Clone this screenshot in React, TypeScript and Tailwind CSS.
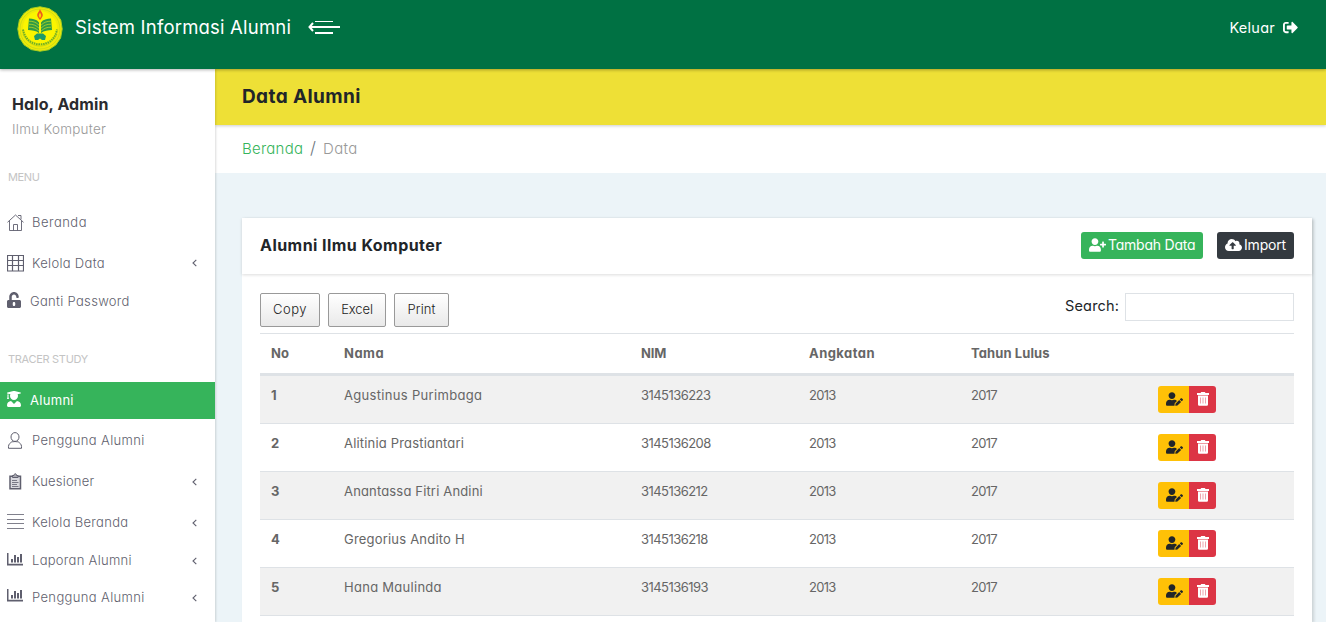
import type { ReactNode } from 'react';
import { FaCloudUploadAlt, FaSignOutAlt, FaUnlockAlt, FaUserEdit, FaUserGraduate, FaUserPlus } from 'react-icons/fa';

const line = { fill: 'none', stroke: 'currentColor', strokeWidth: 1 };

function Crest() {
  return (
    <svg viewBox="0 0 46 46" className="size-[46px] shrink-0">
      <path
        d="M23 .8 32 2.6 39 7.2 43.8 14 45.2 23 43.6 32 38.8 39 31.6 43.8 23 45.2 14.2 43.6 7 38.8 2.4 31.6.8 23 2.4 14 7.2 7.2 14 2.4Z"
        fill="#f0ea08"
        stroke="#a8cd20"
        strokeWidth="1"
      />
      <circle cx="23" cy="23" r="20" fill="none" stroke="#c4d916" strokeWidth=".8" />
      <circle cx="23" cy="22.5" r="17.2" fill="#fbf500" />
      <path d="M6 28c3 7 9 12 17 12s14-5 17-12" fill="none" stroke="#b5cf18" strokeWidth=".8" />
      <path d="M6 23.500c1.500 9 8 14.800 17 14.800s15.500-5.800 17-14.800" fill="none" stroke="#6fae26" strokeWidth="2" strokeDasharray="1.6 .7" />
      <path d="M12 12.500c4 0 8 1 10 4V27c-3-2.200-7-3-11-3Z" fill="#2e9a45" />
      <path d="M34 12.500c-4 0-8 1-10 4V27c3-2.200 7-3 11-3Z" fill="#2e9a45" />
      <path
        d="M12 15.200c4 0 7 1 10 4M12 18.200c4 0 7 1 10 4M12 21.200c4 0 7 1 10 4M34 15.200c-4 0-7 1-10 4M34 18.200c-4 0-7 1-10 4M34 21.200c-4 0-7 1-10 4"
        fill="none"
        stroke="#cfe022"
        strokeWidth=".7"
      />
      <path d="M23 15v13" stroke="#fbf500" strokeWidth="1.500" />
      <path d="M20 27.500h6l3 2.500-1 4h-3l-2-1.500-2 1.500h-3l-1-4Z" fill="#1f9b68" />
      <path d="M23 3c-.5 2.300-2.800 3.700-2.800 6 0 1.800 1.400 2.800 2 4.600h1.600c.6-1.800 2-2.800 2-4.600 0-2.300-2.300-3.700-2.800-6Z" fill="#ee5a1c" />
      <path d="M23 6.500c-.4 1.200-1.200 2-1.200 3s.7 1.800 1.200 2.500c.5-.7 1.200-1.500 1.200-2.500s-.8-1.800-1.200-3Z" fill="#fbd500" />
    </svg>
  );
}

function MenuArrow() {
  return (
    <svg viewBox="0 0 32 14" className="h-[14px] w-8 -translate-y-[2px]" fill="none" stroke="#fff">
      <path d="M7 1.500h18" strokeWidth="1" />
      <path d="M1.500 7H32M7 13h18" strokeWidth="2" />
      <path d="M5 3 1.500 7 5 11" strokeWidth="2" />
    </svg>
  );
}

const TrashIcon = () => (
  <svg viewBox="0 0 12 14" className="h-[14px] w-3 -translate-y-px">
    <path d="M0 1h3.500L4.200 0h3.600l.7 1H12v2H0ZM1 3.500h10V12.500a1.200 1.200 0 0 1-1.200 1.200H2.200A1.200 1.200 0 0 1 1 12.500Z" fill="#fff" />
    <path d="M3.500 5.500v6M6 5.500v6M8.500 5.500v6" stroke="#ec9aa3" strokeWidth=".9" />
  </svg>
);

const HomeIcon = () => (
  <svg viewBox="0 0 17 17" className="size-[17px]" {...line}>
    <path d="m.5 8.300 8-7.300 8 7.300M2.500 7v9.500h12V7M6.500 16.500v-6h4v6M11 1.500h3v4" strokeWidth=".9" />
  </svg>
);
const GridIcon = () => (
  <svg viewBox="0 0 17 17" className="size-[17px]" {...line}>
    <path d="M.5.500h16v15.500H.5ZM5.500.500v15.500M11.500.500v15.500M.5 5.500h16M.5 10.500h16" strokeWidth="1.200" />
  </svg>
);
const UserIcon = () => (
  <svg viewBox="0 0 17 17" className="size-[17px]" {...line}>
    <ellipse cx="8" cy="5" rx="4" ry="4.400" />
    <path d="M5.500 8.700c-.3 1.300-1 1.500-1.800 2C2 11.800 1.200 13.500 1.500 16.300h13c.3-2.800-.5-4.500-2.200-5.600-.8-.5-1.500-.7-1.800-2M5.500 10c1.500-.6 3.500-.6 5 0" />
  </svg>
);
const ClipboardIcon = () => (
  <svg viewBox="0 0 17 17" className="size-[17px]" fill="none" stroke="currentColor">
    <path d="M3 3.300h10.500v12.400H3Z" strokeWidth="1.500" fill="#d9d9df" />
    <path d="M5.500 4.500v-2h1.500c0-2.300 2.600-2.300 2.600 0h1.500v2Z" fill="#aaaab2" strokeWidth="1" />
    <path d="M5 7.500h5M5 9.500h6.500M5 11.500h5M5 13.500h6.500" strokeWidth=".8" />
  </svg>
);
const LinesIcon = () => (
  <svg viewBox="0 0 17 15" className="h-[15px] w-[17px] -translate-y-px" {...line}>
    <path d="M0 .5h17M0 5.500h17M0 9.500h17M0 14.500h17" strokeWidth=".8" />
  </svg>
);
const ChartIcon = () => (
  <svg viewBox="0 0 16 13" className="h-[13px] w-4 -translate-y-[2px]" fill="currentColor">
    <path d="M0 0h1.500v10.800H16V12.500H0ZM4 6h2v3.500H4ZM7 2h2v7.500H7ZM10 4h2v5.500h-2ZM13 1h2v8.500h-2Z" />
  </svg>
);
const Chevron = () => (
  <svg viewBox="0 0 5 8" className="mr-[18px] ml-auto h-2 w-[5px]" {...line}>
    <path d="M4.300.800 1 4l3.300 3.200" strokeWidth="1.100" />
  </svg>
);

type ItemProps = { icon: ReactNode; row: string; label: string; text: string; sub?: boolean };

function Item({ icon, row, label, text, sub }: ItemProps) {
  return (
    <a className={`flex items-center pl-[7px] text-[13px] ${row}`}>
      <span className="flex w-[17px] shrink-0">{icon}</span>
      <span className={`whitespace-nowrap ${text}`}>{label}</span>
      {sub && <Chevron />}
    </a>
  );
}

const alumni = [
  { name: 'Agustinus Purimbaga', nim: '3145136223', track: 'tracking-[0.32px]' },
  { name: 'Alitinia Prastiantari', nim: '3145136208', track: 'tracking-[0.18px]' },
  { name: 'Anantassa Fitri Andini', nim: '3145136212', track: 'tracking-[0.16px]' },
  { name: 'Gregorius Andito H', nim: '3145136218', track: 'tracking-[0.2px]' },
  { name: 'Hana Maulinda', nim: '3145136193', track: 'tracking-[0.28px]' },
];

const cols = 'grid grid-cols-[73px_297px_168px_162px_187px_1fr] pl-[11px]';
const toolButton =
  'flex h-[34px] items-center justify-center rounded-[2px] border border-[#999] bg-linear-to-b from-white to-[#e9e9e9] text-[13px] font-light text-[#222]';

export default function App() {
  return (
    <div className="flex h-[622px] flex-col overflow-hidden bg-[#ecf4f8] font-['Inter','Liberation_Sans',sans-serif] [font-feature-settings:'cv11'_1]">
      <header className="z-20 flex h-[69px] shrink-0 items-start justify-between bg-[#007143] pr-[28px] pl-[17px] text-white shadow-[0_1px_3px_rgba(0,0,0,0.3)]">
        <div className="flex h-[54px] items-center pt-[3px]">
          <Crest />
          <h1 className="ml-[12px] w-[233px] -translate-y-[2px] text-[18.5px] leading-6 tracking-[0.2px]">Sistem Informasi Alumni</h1>
          <MenuArrow />
        </div>
        <a className="flex h-[55px] items-center gap-[8px] text-[14.5px] tracking-[0.25px]">
          Keluar
          <FaSignOutAlt className="size-[15px]" />
        </a>
      </header>

      <div className="flex min-h-0 flex-1">
        <aside className="z-10 flex w-[215px] shrink-0 flex-col bg-white font-light text-[#5f5f6e] shadow-[1px_0_2px_rgba(0,0,0,0.14)]">
          <div className="h-[97px] pt-[23px] pl-[12px]">
            <p className="text-[16px] leading-6 font-bold tracking-[0.1px] text-[#2b2b2f]">Halo, Admin</p>
            <p className="mt-px text-[13.5px] leading-6 tracking-[0.25px] text-[#999]">Ilmu Komputer</p>
          </div>
          <p className="h-[36px] pl-2 text-[11px] leading-[22px] font-normal tracking-[-0.35px] text-[#c4c4c4]">MENU</p>
          <nav>
            <Item icon={<HomeIcon />} row="h-[41px]" label="Beranda" text="ml-[8px] tracking-[0.49px]" />
            <Item icon={<GridIcon />} row="h-[40px]" label="Kelola Data" text="ml-[8px] pt-px tracking-[0.31px]" sub />
            <Item icon={<FaUnlockAlt className="h-4 w-[14px] -translate-y-px" />} row="h-[36px]" label="Ganti Password" text="ml-[6px] pt-[2px] tracking-[0.31px]" />
          </nav>
          <p className="mt-[29px] h-[34px] pl-2 text-[11px] leading-[22px] font-normal tracking-[-0.3px] text-[#c4c4c4]">TRACER STUDY</p>
          <nav>
            <Item
              icon={<FaUserGraduate className="h-4 w-[14px] -translate-y-[2px]" />}
              row="h-[37px] bg-[#36b45b] font-normal text-white"
              label="Alumni"
              text="ml-[6px] tracking-[0.3px]"
            />
            <Item icon={<UserIcon />} row="h-[42px]" label="Pengguna Alumni" text="ml-[8px] pt-px tracking-[0.37px]" />
            <Item icon={<ClipboardIcon />} row="h-[41px]" label="Kuesioner" text="ml-[8px] tracking-[0.2px]" sub />
            <Item icon={<LinesIcon />} row="h-[41px]" label="Kelola Beranda" text="ml-[8px] tracking-[0.3px]" sub />
            <Item icon={<ChartIcon />} row="h-[36px]" label="Laporan Alumni" text="ml-[8px] tracking-[0.29px]" sub />
            <Item icon={<ChartIcon />} row="h-[37px]" label="Pengguna Alumni" text="ml-[8px] tracking-[0.37px]" sub />
          </nav>
        </aside>

        <main className="flex min-w-0 flex-1 flex-col">
          <div className="z-[1] flex h-[56px] shrink-0 items-center bg-[#eee036] pl-[27px] shadow-[0_1px_3px_rgba(0,0,0,0.2)]">
            <h2 className="text-[19px] font-bold tracking-[0.4px] text-[#212529]">Data Alumni</h2>
          </div>
          <div className="flex h-[48px] shrink-0 items-center bg-white pl-[27px] text-[15px] font-light">
            <a className="w-[68px] tracking-[0.25px] text-[#36b45b]">Beranda</a>
            <span className="w-[13px] text-[17px] text-[#6c757d]">/</span>
            <span className="tracking-[0.4px] text-[#999]">Data</span>
          </div>

          <section className="mt-[45px] mr-[14px] ml-[27px] flex-1 bg-white shadow-[2px_1px_3px_rgba(0,0,0,0.14)]">
            <div className="flex h-[56px] items-center px-[18px] pb-[2px] shadow-[0_1px_3px_rgba(0,0,0,0.14)]">
              <h3 className="mr-auto text-[16px] font-bold tracking-[0.45px] text-[#212529]">Alumni Ilmu Komputer</h3>
              <button className="flex h-[27px] w-[122px] items-center gap-[2px] rounded-[3px] bg-[#36b45b] pb-px pl-2 text-[14px] tracking-[-0.22px] whitespace-nowrap text-white">
                <FaUserPlus className="h-[14px] w-[17px] shrink-0" />
                Tambah Data
              </button>
              <button className="ml-[14px] flex h-[27px] w-[77px] items-center gap-[2px] rounded-[3px] bg-[#343a40] pb-px pl-2 text-[14px] tracking-[-0.18px] whitespace-nowrap text-white">
                <FaCloudUploadAlt className="h-[14px] w-[17px] shrink-0" />
                Import
              </button>
            </div>

            <div className="px-[18px] pt-[19px]">
              <div className="flex h-[40px] items-start">
                <button className={`${toolButton} w-[60px] tracking-[0.5px]`}>Copy</button>
                <button className={`${toolButton} ml-2 w-[58px] tracking-[-0.1px]`}>Excel</button>
                <button className={`${toolButton} ml-2 w-[55px] tracking-[0.1px]`}>Print</button>
                <label className="ml-auto flex items-start text-[14.5px] leading-[26px] tracking-[0.15px] text-[#212529]">
                  Search:
                  <input className="ml-[6px] h-[28px] w-[169px] border border-[#dee2e6] bg-white" />
                </label>
              </div>

              <div className="border-t border-[#dee2e6] text-[13px] text-[#666]">
                <div className={`${cols} h-[42px] border-b-3 border-[#dee2e6] leading-[38px] font-bold`}>
                  <span className="tracking-[0.1px]">No</span>
                  <span className="tracking-[0.5px]">Nama</span>
                  <span className="tracking-[-0.2px]">NIM</span>
                  <span className="tracking-[0.45px]">Angkatan</span>
                  <span className="tracking-[0.1px]">Tahun Lulus</span>
                </div>
                {alumni.map((a, i) => (
                  <div key={a.nim} className={`${cols} h-[48px] border-b border-[#dee2e6] leading-[39px] odd:bg-white even:bg-[#f1f1f1]`}>
                    <span className="font-bold">{i + 1}</span>
                    <span className={a.track}>{a.name}</span>
                    <span className="tracking-[-0.55px]">{a.nim}</span>
                    <span className="tracking-[-0.75px]">2013</span>
                    <span className="tracking-[-0.75px]">2017</span>
                    <span className="flex pt-[10px]">
                      <button className="flex h-[27px] w-[31px] items-center justify-center rounded-l-[3px] bg-[#ffc107] pb-[2px] pl-[2px] text-[#212529]">
                        <FaUserEdit className="h-[14px] w-[17px]" />
                      </button>
                      <button className="flex h-[27px] w-[27px] items-center justify-center rounded-r-[3px] bg-[#dc3545]">
                        <TrashIcon />
                      </button>
                    </span>
                  </div>
                ))}
              </div>
            </div>
          </section>
        </main>
      </div>
    </div>
  );
}
